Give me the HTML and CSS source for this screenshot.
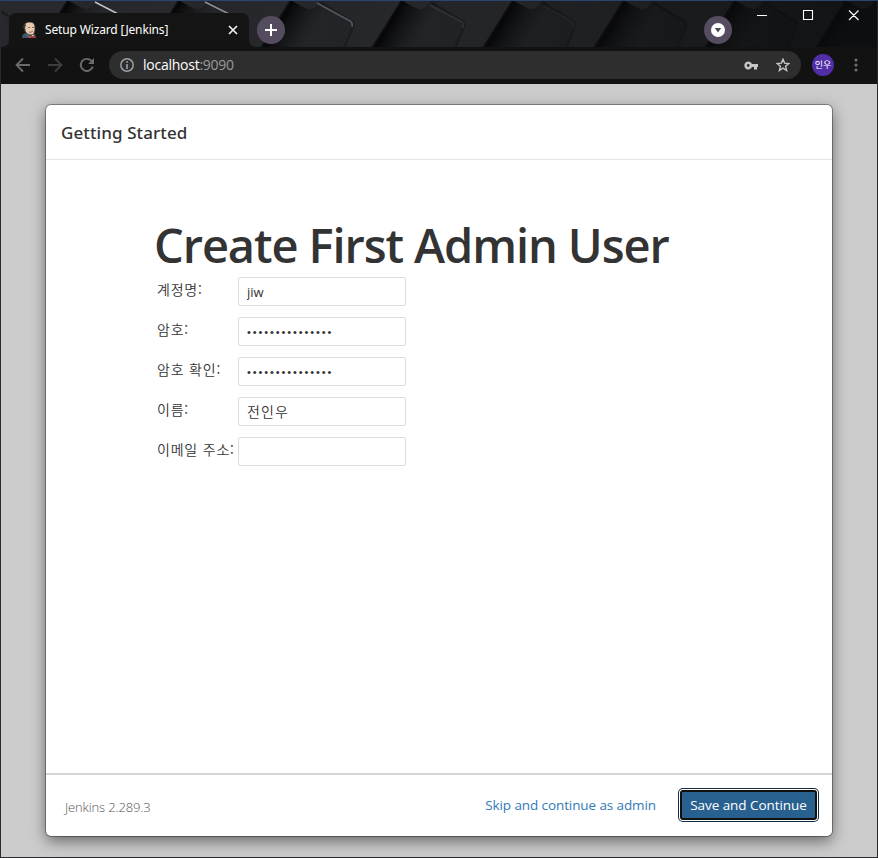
FILE: index.html
```
<!DOCTYPE html>
<html lang="ko">
<head>
<meta charset="utf-8">
<title>Setup Wizard [Jenkins]</title>
<link rel="stylesheet" href="styles.css">
</head>
<body>
<div class="window">
  <header class="tabstrip">
    <svg class="theme" width="876" height="46" viewBox="1 1 876 46" aria-hidden="true">
      <defs>
        <linearGradient id="base" x1="0" x2="1"><stop offset="0" stop-color="#26282b"/><stop offset=".6" stop-color="#212225"/><stop offset=".85" stop-color="#1c1d1f"/><stop offset="1" stop-color="#101112"/></linearGradient>
        <linearGradient id="gap" gradientUnits="userSpaceOnUse" x1="-1" y1="-1" x2="32" y2="19"><stop offset="0" stop-color="#000" stop-opacity=".2"/><stop offset=".15" stop-color="#030304" stop-opacity=".9"/><stop offset=".4" stop-color="#08090a" stop-opacity=".65"/><stop offset="1" stop-color="#111" stop-opacity="0"/></linearGradient>
        <linearGradient id="side" x1="0" x2="1"><stop offset="0" stop-color="#292b2f" stop-opacity=".2"/><stop offset="1" stop-color="#2b2d31" stop-opacity=".5"/></linearGradient>
        <linearGradient id="dim" x1="0" x2="1"><stop offset=".5" stop-color="#101113" stop-opacity="0"/><stop offset="1" stop-color="#0c0d0e" stop-opacity=".7"/></linearGradient>
        <g id="key">
          <path d="M31 0L66 22L55 48H83L113 0Z" fill="url(#side)"/>
          <path d="M2 0L-28 48H24L50 0Z" fill="url(#gap)"/>
          <path d="M2 0L17 8Q23 11 28 6L32 0Z" fill="#25272a"/>
          <path d="M33 3L61 20Q66 22 65 27L56 48" fill="none" stroke="#080809" stroke-width="2.5" opacity=".3"/>
        </g>
      </defs>
      <rect width="878" height="47" fill="url(#base)"/>
      <use href="#key" x="-46"/><use href="#key" x="65"/><use href="#key" x="176"/><use href="#key" x="288"/><use href="#key" x="399"/><use href="#key" x="510"/><use href="#key" x="621"/><use href="#key" x="732"/><use href="#key" x="843"/>
      <g fill="none" stroke-width="1.6"><path d="M95 2L120 15" stroke="#bfc3c7"/><path d="M205 2L231 15" stroke="#8b8f94"/><path d="M317 3L350 21Q353 23 352 27" stroke="#54575b"/><path d="M430 5L462 22Q464 24 463 28" stroke="#313336"/><path d="M544 6L573 22Q575 24 574 28" stroke="#27292c"/></g>
      <rect width="878" height="47" fill="url(#dim)"/>
    </svg>
    <svg class="tab-shape" width="258" height="34" viewBox="0 0 258 34" aria-hidden="true"><path d="M0 34Q8 34 8 26V8Q8 0 16 0H240Q248 0 248 8V26Q248 34 256 34Z" fill="#141414"/></svg>
    <div class="tab">
      <svg class="favicon" width="16" height="16" viewBox="0 0 16 16">
        <path d="M0 16Q0 11 5 11H11Q14 12 14 16Z" fill="#3b5968"/>
        <path d="M2 5Q2 0 8 0Q13 0 13 6Q13 13 9 13Q5 13 3 9Z" fill="#e6cbb0" stroke="#39312c" stroke-width=".7"/>
        <path d="M2 7Q0 4 3 1L4 3L3 6L4 9Z" fill="#453c36"/>
        <path d="M6 5.5H8M10 5.5H12M7 10Q9 11 11 9" stroke="#8d6a59" fill="none"/>
        <path d="M5 12.5L8 16L11 12.5L13 15H8Z" fill="#ddd"/><path d="M7 13.5L10 14.2L13 13.5V16L10 15.2L7 16Z" fill="#c9322c"/>
      </svg>
      <span class="tab-title">Setup Wizard [Jenkins]</span>
      <svg class="tab-close" width="10" height="10" viewBox="0 0 10 10"><path d="M1 1L9 9M9 1L1 9" stroke="#f1f1f1" stroke-width="1.7"/></svg>
    </div>
    <div class="round new-tab"><svg width="14" height="14" viewBox="0 0 14 14"><path d="M7 1V13M1 7H13" stroke="#fff" stroke-width="2"/></svg></div>
    <div class="round tab-search"><svg width="14" height="14" viewBox="0 0 14 14"><circle cx="7" cy="7" r="7" fill="#fff"/><path d="M3.8 5H10.2L7 9.4Z" fill="#51475b"/></svg></div>
    <svg class="controls" width="103" height="12" viewBox="0 0 103 12"><path d="M0 6.5H10M46.5 1.5H55.5V10.5H46.5ZM92 1.5L101.5 11M101.5 1.5L92 11" fill="none" stroke="#fff" stroke-width="1.1"/></svg>
  </header>
  <nav class="toolbar">
    <svg class="back" width="16" height="16" viewBox="0 0 16 16"><path d="M15 8H2M8 1.5L1.5 8L8 14.5" fill="none" stroke="#6b6b6b" stroke-width="1.8"/></svg>
    <svg class="forward" width="16" height="16" viewBox="0 0 16 16"><path d="M1 8H14M8 1.5L14.5 8L8 14.5" fill="none" stroke="#3e3e3e" stroke-width="1.8"/></svg>
    <svg class="reload" width="16" height="16" viewBox="0 0 16 16"><path d="M13.8 9.5A6.1 6.1 0 1 1 12.3 3.7L14 5.4" fill="none" stroke="#6b6b6b" stroke-width="1.9"/><path d="M15 1V7H9Z" fill="#6b6b6b"/></svg>
    <div class="omnibox">
      <svg width="14" height="14" viewBox="0 0 14 14"><circle cx="7" cy="7" r="6.2" fill="none" stroke="#9aa0a6" stroke-width="1.5"/><path d="M7 6V11M7 3V4.7" stroke="#9aa0a6" stroke-width="1.6"/></svg>
      <span class="url">localhost<span class="port">:9090</span></span>
      <svg class="keyicon" width="14" height="9" viewBox="0 0 14 9"><path fill-rule="evenodd" d="M8 3A4 4 0 1 0 8 6H10V8.5H13V6H14V3ZM4.2 3.1A1.4 1.4 0 1 1 4.2 5.9A1.4 1.4 0 0 1 4.2 3.1Z" fill="#c6c6c6"/></svg>
      <svg class="star" width="14" height="14" viewBox="0 0 14 14"><path d="M7 1.3L8.6 5.1L12.8 5.5L9.6 8.2L10.6 12.5L7 10.2L3.4 12.5L4.4 8.2L1.2 5.5L5.4 5.1Z" fill="none" stroke="#c6c6c6" stroke-width="1.4"/></svg>
    </div>
    <div class="avatar">인우</div>
    <svg class="more" width="4" height="14" viewBox="0 0 4 14" fill="#707070"><circle cx="2" cy="2" r="1.6"/><circle cx="2" cy="7" r="1.6"/><circle cx="2" cy="12" r="1.6"/></svg>
  </nav>
  <main class="page">
    <section class="dialog">
      <div class="dialog-header"><h4>Getting Started</h4></div>
      <div class="dialog-body">
        <h1>Create First Admin User</h1>
        <form class="fields">
          <label for="user">계정명:</label><input id="user" type="text" value="jiw">
          <label for="pw">암호:</label><div class="field secret" id="pw">•••••••••••••••</div>
          <label for="pw2">암호 확인:</label><div class="field secret" id="pw2">•••••••••••••••</div>
          <label for="name">이름:</label><input class="ko" id="name" type="text" value="전인우">
          <label for="mail">이메일 주소:</label><input id="mail" type="text">
        </form>
      </div>
      <footer class="dialog-footer">
        <span class="version">Jenkins 2.289.3</span>
        <a class="skip">Skip and continue as admin</a>
        <button class="save" type="button">Save and Continue</button>
      </footer>
    </section>
  </main>
</div>
</body>
</html>
```
FILE: styles.css
```
* { box-sizing: border-box; }
body { margin: 0; width: 878px; height: 858px; overflow: hidden; font-family: "Open Sans", "Noto Sans CJK KR", sans-serif; color: #333; }
svg { display: block; flex: none; }
.window { width: 878px; height: 858px; border: 1px solid #2a2a2e; border-top-color: #2c4570; display: flex; flex-direction: column; background: #ccc; }
.tabstrip { height: 46px; position: relative; display: flex; align-items: flex-start; flex: none; background: #202124; }
.theme { position: absolute; left: 0; top: 0; }
.tab-shape { position: absolute; left: 0; top: 12px; }
.tab { position: relative; display: flex; align-items: center; width: 248px; height: 34px; margin-top: 12px; padding: 0 11px 0 21px; }
.tab-title { flex: 1; margin: -1px 0 0 7px; font-family: "Noto Sans", sans-serif; font-size: 12px; letter-spacing: -.15px; color: #fff; white-space: nowrap; }
.round { position: relative; width: 28px; height: 28px; border-radius: 50%; background: #564c60; display: flex; align-items: center; justify-content: center; margin: 15px 0 0 8px; flex: none; }
.tab-search { margin-left: 419px; }
.controls { position: relative; margin: 8px 0 0 25px; }
.toolbar { height: 37px; flex: none; display: flex; align-items: center; padding: 0 19px 1px 14px; background: #121212; }
.forward, .reload { margin-left: 16px; }
.omnibox { display: flex; align-items: center; width: 693px; height: 28px; margin-left: 14px; padding: 0 11px; border-radius: 14px; background: #2e2e2e; }
.url { flex: 1; margin: -1px 0 0 9px; font-size: 14px; letter-spacing: -.25px; color: #fff; }
.port { color: #9a9a9a; }
.star { margin-left: 18px; }
.avatar { width: 22px; height: 22px; margin-left: 11px; border-radius: 50%; background: #512da8; color: #fff; font: 9px/22px "Noto Sans CJK KR", sans-serif; text-align: center; }
.more { margin-left: 20px; }
.page { flex: 1; padding: 21px 44px 20px 45px; background: #ccc; }
.dialog { width: 786px; height: 731px; display: flex; flex-direction: column; background: #fff; border-radius: 5px; box-shadow: 0 0 0 1px rgba(0,0,0,.33), 0 5px 15px rgba(0,0,0,.5); }
.dialog-header { height: 55px; border-bottom: 1px solid #e5e5e5; padding: 0 15px; display: flex; align-items: center; }
h4 { margin: 0; font-size: 17px; font-family: "Noto Sans", sans-serif; font-weight: 500; letter-spacing: .1px; white-space: nowrap; }
.dialog-body { height: 613px; padding: 53px 108px 0; }
h1 { margin: 0; font-size: 47px; font-weight: 600; line-height: 64px; letter-spacing: -1.1px; white-space: nowrap; }
.fields { display: grid; grid-template-columns: 81px 168px; grid-auto-rows: 29px; row-gap: 11px; margin-left: 3px; }
.fields label { font: 350 14px/25px "Noto Sans CJK KR", sans-serif; letter-spacing: .8px; white-space: nowrap; }
.fields input, .field { width: 168px; height: 29px; margin: 0; padding: 0 8px; border: 1px solid #dcdcdc; border-radius: 2px; background: #fff; color: #333; font: 13px "Open Sans", sans-serif; outline: 0; }
.fields .ko { padding: 0 8px 2px; font: 350 14px "Noto Sans CJK KR", sans-serif; letter-spacing: 1.1px; }
.fields .secret { font: 11px/27px "Liberation Sans", sans-serif; padding-top: 1px; letter-spacing: 1.9px; }
.dialog-footer { flex: 1; display: flex; align-items: center; border-top: 2px solid #d6d6d6; padding: 0 15px 2px 19px; }
.version { flex: 1; font-size: 13px; font-weight: 300; letter-spacing: -.15px; color: #555; padding-top: 4px; }
.skip { font-size: 13.5px; letter-spacing: -.1px; color: #337ab7; margin-right: 24px; white-space: nowrap; }
.save { width: 137px; height: 30px; padding: 1px 0 0; border: 2px solid #101010; border-radius: 3px; background: #286090; color: #fff; font: 13.5px "Open Sans", sans-serif; letter-spacing: -.05px; box-shadow: 0 0 0 1px #fff, 0 0 0 2px #122b40; white-space: nowrap; }
```
